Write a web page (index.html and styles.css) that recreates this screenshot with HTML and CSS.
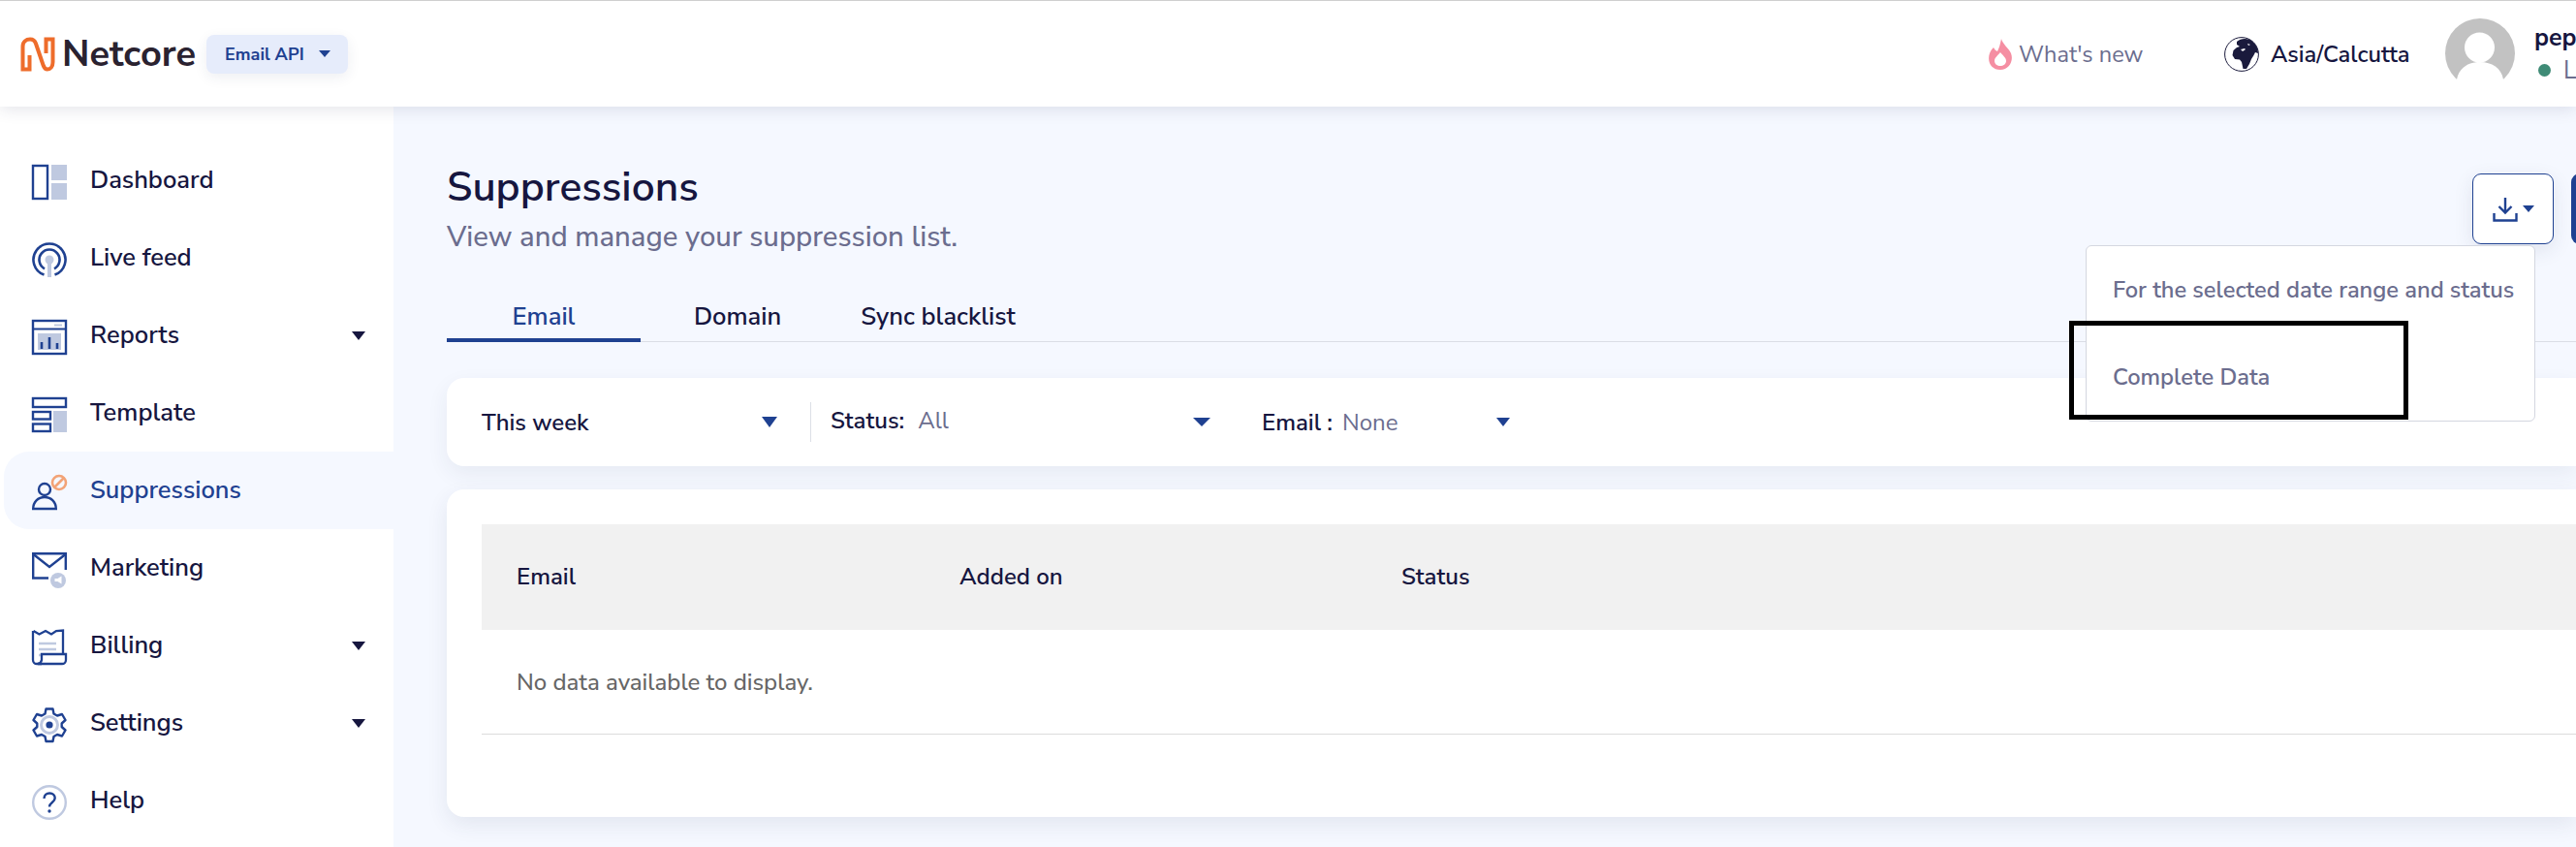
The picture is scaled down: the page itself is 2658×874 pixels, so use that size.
FILE: index.html
```html
<!DOCTYPE html>
<html lang="en">
<head>
<meta charset="utf-8">
<title>Suppressions</title>
<link rel="stylesheet" href="styles.css">
</head>
<body>
<div class="app">
  <header class="topbar">
    <div class="brand">
      <svg class="logo-mark" viewBox="0 0 36 36"><path d="M0.500 33.500H9.500V19M2.500 35V10C2.500 5 6 2.500 10 2.500C13 2.500 15 4 16 7L23.500 29C24.500 32 26.500 33.500 28 33.500C31 33.500 33.500 31 33.500 26V1M35.500 2.500H26.500V17" fill="none" stroke="#ee6c2b" stroke-width="4"/></svg>
      <span class="logo-text">Netcore</span>
      <div class="product-pill"><span>Email API</span><i class="caret caret-blue-sm"></i></div>
    </div>
    <div class="top-right">
      <div class="whats-new">
        <svg class="flame" viewBox="0 0 24 32"><path d="M13 0C14 5 20 9 23 15c3 8-2 17-11 17S-2 24 1 15c1-3 3-5 4-6 1 2 2 3 4 4 2-4 3-8 4-13zM12 14c-2 3-6 5-6 9 0 3 3 5 6 5s6-2 6-5c0-4-4-6-6-9z" fill="#f58ea2" fill-rule="evenodd"/></svg>
        <span>What's new</span>
      </div>
      <div class="timezone">
        <svg class="globe" viewBox="0 0 36 36"><circle cx="18" cy="18" r="17.400" fill="#fff" stroke="#1a1a3c" stroke-width="1"/><path d="M13 5C17 1.500 24 1 29 4.500C33 8 35 12 35 17L32 16L30.500 19L28 23L26 28L23 33L19.500 33L18 26L16 23.500L11 23L8.500 19L9.500 14L13 11L16 10L13 8z" fill="#1a1a3c"/><path d="M17 13l4-1 1 1-3 2zM24 7l3 1-2 1z" fill="#fff"/></svg>
        <span>Asia/Calcutta</span>
      </div>
      <div class="avatar">
        <svg viewBox="0 0 72 72"><circle cx="36" cy="36" r="36" fill="#c2c2c2"/><circle cx="35.500" cy="30" r="15.500" fill="#fff"/><path d="M12 63C14 51 24 45 36 45S58 51 60 63z" fill="#fff"/></svg>
      </div>
      <div class="user">
        <strong>pep</strong>
        <div class="user-status"><i class="dot"></i><span>L</span></div>
      </div>
    </div>
  </header>

  <div class="body">
    <nav class="sidebar">
      <a class="nav-item">
        <svg class="nav-icon" viewBox="0 0 36 36"><rect x="1" y="1" width="15" height="34" fill="none" stroke="#1f4191" stroke-width="2.400"/><rect x="20" width="16" height="16" fill="#bfc9e0"/><rect x="20" y="19" width="16" height="17" fill="#bfc9e0"/></svg>
        <span>Dashboard</span>
      </a>
      <a class="nav-item">
        <svg class="nav-icon" viewBox="0 0 36 36"><path d="M12.500 33.600A16.500 16.500 0 1 1 23.500 33.600" fill="none" stroke="#1f4191" stroke-width="2.600"/><path d="M13 27.300A10.500 10.500 0 1 1 23 27.300" fill="none" stroke="#1f4191" stroke-width="2.600"/><circle cx="18" cy="18" r="4.500" fill="#bfc9e0"/><rect x="16" y="20" width="4" height="16" fill="#bfc9e0"/></svg>
        <span>Live feed</span>
      </a>
      <a class="nav-item">
        <svg class="nav-icon" viewBox="0 0 36 36"><rect x="1" y="1" width="34" height="34" fill="none" stroke="#1f4191" stroke-width="2.400"/><path d="M1 9.500h34" stroke="#1f4191" stroke-width="2"/><rect x="23" y="4.500" width="8" height="2" fill="#bfc9e0"/><rect x="6" y="14" width="24" height="17" fill="#bfc9e0"/><path d="M10 23v7M18 18v12M26 24v6" stroke="#1f4191" stroke-width="2.600"/></svg>
        <span>Reports</span><i class="caret caret-dark"></i>
      </a>
      <a class="nav-item">
        <svg class="nav-icon" viewBox="0 0 36 36"><rect x="1" y="1" width="34" height="9" fill="none" stroke="#1f4191" stroke-width="2.400"/><rect x="1" y="15" width="18" height="7.500" fill="none" stroke="#1f4191" stroke-width="2.400"/><rect x="1" y="27.500" width="18" height="7.500" fill="none" stroke="#1f4191" stroke-width="2.400"/><rect x="22" y="14" width="14" height="22" fill="#bfc9e0"/></svg>
        <span>Template</span>
      </a>
      <a class="nav-item active">
        <svg class="nav-icon" viewBox="0 0 36 36"><circle cx="13" cy="15" r="6" fill="none" stroke="#1f4191" stroke-width="2.400"/><path d="M1.200 35c0-7 5-12 11.800-12s11.800 5 11.800 12z" fill="none" stroke="#1f4191" stroke-width="2.400"/><circle cx="28" cy="8" r="7" fill="none" stroke="#f2a377" stroke-width="2.600"/><path d="M23 13l10-10" stroke="#f2a377" stroke-width="2.600"/></svg>
        <span>Suppressions</span>
      </a>
      <a class="nav-item">
        <svg class="nav-icon" viewBox="0 0 36 36"><path d="M17 26.500H1.200V1.200h33.600V18" fill="none" stroke="#1f4191" stroke-width="2.400"/><path d="M1.500 2l16.500 13L34.500 2" fill="none" stroke="#1f4191" stroke-width="2.400"/><circle cx="27" cy="29" r="8" fill="#bfc9e0"/><path d="M23.500 27h3l4-2.500v8l-4-2.500h-3z" fill="#fff"/></svg>
        <span>Marketing</span>
      </a>
      <a class="nav-item">
        <svg class="nav-icon" viewBox="0 0 36 36"><path d="M1.500 1l6 3.500L14 1l6 3.500L25 1l7-0.500V24M10 35H5a4 4 0 0 1-4-4V1" fill="none" stroke="#1f4191" stroke-width="2.300"/><path d="M7 14h18M7 20h18M7 26h10" stroke="#bfc9e0" stroke-width="2.400"/><path d="M10 25h25v6a4 4 0 0 1-4 4H6a5 5 0 0 0 4-4z" fill="#fff" stroke="#1f4191" stroke-width="2.300"/></svg>
        <span>Billing</span><i class="caret caret-dark"></i>
      </a>
      <a class="nav-item">
        <svg class="nav-icon" viewBox="0 0 36 36"><path d="M14.500 1.500h7l1 5 3.500 2 5-1.500 3.500 6-3.800 3.500v3.500l3.800 3.500-3.500 6-5-1.500-3.500 2-1 5h-7l-1-5-3.500-2-5 1.500-3.500-6 3.800-3.500v-3.500L1.500 13l3.500-6 5 1.500 3.500-2z" fill="none" stroke="#1f4191" stroke-width="2.400" stroke-linejoin="round"/><circle cx="18" cy="18" r="8.500" fill="none" stroke="#bfc9e0" stroke-width="3"/><circle cx="18" cy="18" r="3.600" fill="#1f4191"/></svg>
        <span>Settings</span><i class="caret caret-dark"></i>
      </a>
      <a class="nav-item">
        <svg class="nav-icon" viewBox="0 0 36 36"><circle cx="18" cy="18" r="16.800" fill="none" stroke="#bfc9e0" stroke-width="2.400"/><path d="M12.500 14c0-3.500 2.500-5.500 5.700-5.500s5.500 2 5.500 5c0 4.500-5.700 4.500-5.700 9" fill="none" stroke="#1f4191" stroke-width="2.400"/><circle cx="18" cy="27" r="1.700" fill="#1f4191"/></svg>
        <span>Help</span>
      </a>
    </nav>

    <main class="content">
      <div class="page-head">
        <div class="page-title">
          <h1>Suppressions</h1>
          <p>View and manage your suppression list.</p>
        </div>
        <div class="head-actions">
          <button class="download-btn">
            <svg viewBox="0 0 26 26"><path d="M13 1v15M6.500 10l6.500 6.500 6.500-6.500" fill="none" stroke="#1f4191" stroke-width="2.400"/><path d="M1.500 17v7.500h23V17" fill="none" stroke="#1f4191" stroke-width="2.400"/></svg>
            <i class="caret caret-blue-sm"></i>
          </button>
          <button class="primary-btn"></button>
          <div class="menu">
            <div class="menu-item">For the selected date range and status</div>
            <div class="menu-item">Complete Data</div>
          </div>
          <div class="annotation"></div>
        </div>
      </div>

      <div class="tabs">
        <div class="tab active">Email</div>
        <div class="tab">Domain</div>
        <div class="tab tab-wide">Sync blacklist</div>
      </div>

      <section class="filters">
        <div class="filter filter-date"><span>This week</span><i class="caret caret-blue"></i></div>
        <div class="filter filter-status"><b>Status:</b><span class="filter-value">All</span><i class="caret caret-status"></i></div>
        <div class="filter filter-email"><b>Email :</b><span class="filter-value">None</span><i class="caret caret-email"></i></div>
      </section>

      <section class="table-card">
        <div class="thead">
          <div>Email</div>
          <div>Added on</div>
          <div>Status</div>
        </div>
        <div class="empty">No data available to display.</div>
      </section>
    </main>
  </div>
</div>
</body>
</html>
```

FILE: styles.css
```css
* { box-sizing: border-box; }
html, body { margin: 0; padding: 0; }
body {
  width: 2658px;
  height: 874px;
  overflow: hidden;
  font-family: "Nunito Sans", "Lato", "Noto Sans", sans-serif;
  color: #16163f;
  background: #f5f8ff;
}
.app { display: flex; flex-direction: column; height: 874px; }

.topbar {
  position: relative;
  z-index: 3;
  height: 110px;
  flex: none;
  display: flex;
  justify-content: space-between;
  align-items: center;
  background: #fff;
  border-top: 1px solid #cfcfcf;
  box-shadow: 0 2px 16px rgba(40, 50, 90, .14);
  padding-left: 21px;
}
.brand { display: flex; align-items: center; }
.logo-mark { width: 36px; height: 36px; margin-right: 7px; flex: none; overflow: visible; }
.logo-text { font-size: 38px; font-weight: 700; color: #2a2230; width: 149px; }
.product-pill {
  display: flex;
  align-items: center;
  gap: 15px;
  width: 146px;
  height: 40px;
  padding-left: 19px;
  border-radius: 8px;
  background: #e6ecfb;
  color: #1f4191;
  font-size: 18px;
  font-weight: 700;
  box-shadow: 0 4px 14px rgba(40, 50, 90, .08);
}
.top-right { display: flex; align-items: center; width: 606px; flex: none; }
.whats-new { display: flex; flex: none; align-items: center; gap: 7px; width: 243px; color: #6b6d8e; font-size: 23.600px; }
.flame { width: 24px; height: 32px; flex: none; }
.timezone { display: flex; flex: none; align-items: center; gap: 12px; width: 228px; font-size: 23.700px; font-weight: 600; }
.globe { width: 36px; height: 36px; flex: none; }
.avatar { width: 72px; height: 63px; overflow: hidden; margin-bottom: 10px; flex: none; }
.avatar svg { width: 72px; height: 72px; display: block; }
.user { margin-left: 20px; flex: none; white-space: nowrap; font-size: 25px; line-height: 34px; }
.user strong { display: block; font-weight: 700; }
.user-status { display: flex; align-items: center; gap: 13px; color: #6b6d8e; padding-left: 4px; }
.dot { width: 13px; height: 13px; border-radius: 50%; background: #3f8b76; }

.body { flex: 1; display: flex; min-height: 0; }
.sidebar {
  width: 406px;
  flex: none;
  background: #fff;
  padding: 36px 0 0 4px;
  display: flex;
  flex-direction: column;
}
.nav-item {
  height: 80px;
  flex: none;
  display: flex;
  align-items: center;
  gap: 24px;
  padding: 0 29px;
  font-size: 25.500px;
  font-weight: 600;
  border-radius: 26px 0 0 26px;
}
.nav-item span { flex: 1; padding-bottom: 2px; }
.nav-item.active { background: #f5f8ff; color: #1f4191; }
.nav-icon { width: 36px; height: 36px; flex: none; margin-top: 4px; overflow: visible; }

.caret {
  display: block;
  width: 0;
  height: 0;
  border-style: solid;
  border-color: currentColor transparent transparent;
  flex: none;
}
.caret-dark { border-width: 9px 7.500px 0; color: #16163f; }
.caret-blue { border-width: 11px 8px 0; color: #1f4191; }
.caret-status { border-width: 9px 9px 0; color: #1f4191; }
.caret-email { border-width: 9px 7.500px 0; color: #1f4191; }
.caret-blue-sm { border-width: 7px 6px 0; color: #1f4191; }

.content { flex: 1; min-width: 0; padding-left: 55px; overflow: hidden; }
.page-head { display: flex; justify-content: space-between; height: 135px; padding-top: 50px; }
h1 { margin: 0; font-size: 42.500px; line-height: 66px; font-weight: 600; color: #16163f; }
.page-title p { margin: 0; font-size: 29.300px; line-height: 36px; color: #6b6d8e; font-weight: 500; }

.head-actions {
  position: relative;
  z-index: 2;
  display: flex;
  gap: 18px;
  width: 107px;
  height: 73px;
  margin-top: 19px;
  flex: none;
}
.download-btn {
  flex: none;
  width: 84px;
  height: 73px;
  display: flex;
  align-items: center;
  justify-content: center;
  gap: 5px;
  background: #fff;
  border: 1px solid #1f4191;
  border-radius: 9px;
  box-shadow: 0 6px 20px rgba(40, 50, 90, .1);
  padding: 0;
}
.download-btn svg { width: 26px; height: 26px; }
.primary-btn {
  flex: none;
  width: 40px;
  height: 73px;
  background: #1f4191;
  border: 0;
  border-radius: 9px 0 0 9px;
  padding: 0;
}
.menu {
  position: absolute;
  left: -399px;
  top: 74px;
  width: 464px;
  height: 182px;
  background: #fff;
  border: 1px solid #d4d7e0;
  border-radius: 6px;
  color: #6b6d8e;
  font-size: 23.700px;
  font-weight: 600;
  padding: 0 27px;
}
.menu-item { height: 90px; display: flex; align-items: center; white-space: nowrap; }
.annotation {
  position: absolute;
  left: -416px;
  top: 152px;
  width: 350px;
  height: 102px;
  border: 5px solid #000;
}

.tabs {
  display: flex;
  height: 108px;
  border-bottom: 1px solid #dadde6;
  align-items: flex-end;
}
.tab {
  height: 56px;
  width: 200px;
  display: flex;
  align-items: center;
  justify-content: center;
  font-size: 25.500px;
  font-weight: 600;
  padding-top: 6px;
  border-bottom: 4px solid transparent;
  margin-bottom: -1px;
}
.tab-wide { width: 214px; }
.tab.active { color: #1f4191; border-bottom-color: #1f4191; }

.filters {
  display: flex;
  align-items: center;
  margin-top: 37px;
  height: 91px;
  background: #fff;
  border-radius: 18px 0 0 18px;
  box-shadow: 0 8px 22px rgba(40, 50, 90, .07);
  padding-left: 36px;
  font-size: 24px;
}
.filter { display: flex; align-items: center; height: 41px; }
.filter-date { width: 340px; border-right: 1px solid #dcdfe6; padding-right: 34px; justify-content: space-between; font-weight: 600; }
.filter-status { width: 444px; padding: 0 32px 0 20px; }
.filter-email { width: 277px; padding-left: 21px; }
.filter b { font-weight: 600; }
.filter-status b, .filter-status .filter-value { padding-bottom: 3px; }
.filter-value { color: #6b6d8e; margin-left: 14px; flex: 1; }
.filter-email .filter-value { margin-left: 10px; }

.table-card {
  margin-top: 24px;
  height: 338px;
  background: #fff;
  border-radius: 18px 0 0 18px;
  box-shadow: 0 8px 22px rgba(40, 50, 90, .09);
  padding: 36px 0 0 36px;
}
.thead {
  display: grid;
  grid-template-columns: 457px 456px 1fr;
  align-items: center;
  height: 109px;
  background: #f1f1f1;
  padding: 0 0 1px 36px;
  font-size: 24px;
  font-weight: 600;
}
.empty {
  display: flex;
  align-items: center;
  height: 108px;
  padding-left: 36px;
  border-bottom: 1px solid #dcdcdc;
  color: #666;
  font-size: 24px;
  font-weight: 500;
}
```
